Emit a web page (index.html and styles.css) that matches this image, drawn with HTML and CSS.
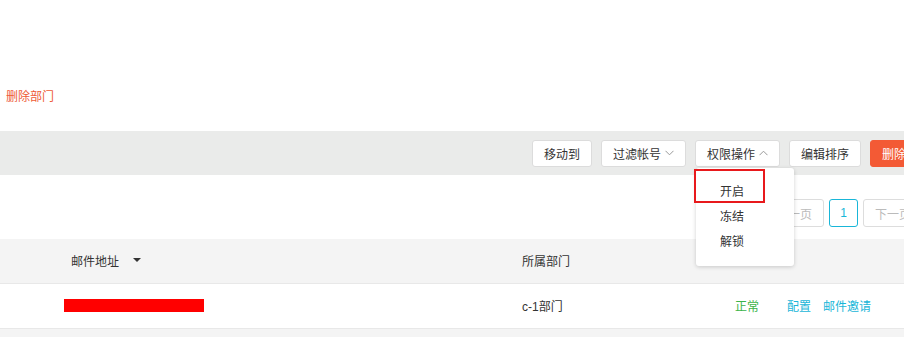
FILE: index.html
```html
<!DOCTYPE html>
<html lang="zh-CN">
<head>
  <meta charset="UTF-8">
  <meta name="viewport" content="width=device-width, initial-scale=1.0">
  <title>成员管理</title>
  <link rel="stylesheet" href="styles.css">
</head>
<body>
  <div class="page">
    <div class="dept-bar">
      <a class="dept-link" href="#">删除部门</a>
    </div>

    <div class="toolbar">
      <button class="btn">移动到</button>
      <button class="btn">过滤帐号
        <svg class="chev" width="9" height="6" viewBox="0 0 9 6"><path d="M0.5 0.8 L4.5 4.8 L8.5 0.8" fill="none" stroke="#999" stroke-width="1"/></svg>
      </button>
      <div class="btn-wrap">
        <button class="btn">权限操作
          <svg class="chev" width="9" height="6" viewBox="0 0 9 6"><path d="M0.5 5.2 L4.5 1.2 L8.5 5.2" fill="none" stroke="#999" stroke-width="1"/></svg>
        </button>
        <ul class="menu">
          <li class="menu-item">开启</li>
          <li class="menu-item">冻结</li>
          <li class="menu-item">解锁</li>
          <li class="mark"></li>
        </ul>
      </div>
      <button class="btn">编辑排序</button>
      <button class="btn btn-danger">删除</button>
    </div>

    <div class="pager">
      <button class="page-btn" disabled>上一页</button>
      <button class="page-btn current">1</button>
      <button class="page-btn" disabled>下一页</button>
    </div>

    <div class="table">
      <div class="row head">
        <div class="cell c-mail">邮件地址<span class="caret"></span></div>
        <div class="cell c-dept">所属部门</div>
        <div class="cell c-status"></div>
        <div class="cell c-ops"></div>
      </div>
      <div class="row">
        <div class="cell c-mail"><span class="masked">user@example.com</span></div>
        <div class="cell c-dept">c-1部门</div>
        <div class="cell c-status"><span class="ok">正常</span></div>
        <div class="cell c-ops"><a href="#">配置</a><a href="#">邮件邀请</a></div>
      </div>
      <div class="row stripe"></div>
    </div>
  </div>
</body>
</html>
```

FILE: styles.css
```css
* {
  margin: 0;
  padding: 0;
  box-sizing: border-box;
}

html, body {
  overflow: hidden;
}

body {
  font-family: 'Liberation Sans', 'Noto Sans CJK SC', sans-serif;
  font-size: 12px;
  color: #333;
  background: #fff;
}

.page {
  width: 940px;
}

.dept-bar {
  height: 131px;
  padding: 89px 0 0 6px;
}

.dept-link {
  color: #ee5a36;
  text-decoration: none;
  line-height: 16px;
}

.toolbar {
  height: 44px;
  background-color: #eaebea;
  display: flex;
  align-items: center;
  justify-content: flex-end;
  gap: 9px;
  padding-right: 22px;
}

.btn {
  height: 27px;
  padding: 0 11px;
  font: inherit;
  color: #333;
  background: #fff;
  border: 1px solid #dcdcdc;
  border-radius: 3px;
  display: flex;
  align-items: center;
  gap: 4px;
}

.btn-danger {
  background-color: #f35a35;
  border-color: #f35a35;
  color: #fff;
  width: 48px;
}

.btn-wrap {
  position: relative;
}

.menu {
  position: absolute;
  top: 28px;
  left: 1px;
  width: 98px;
  height: 98px;
  list-style: none;
  background: #fff;
  border-radius: 3px;
  box-shadow: 0 1px 4px rgba(0, 0, 0, 0.18);
  padding-top: 12px;
  z-index: 5;
}

.menu-item {
  height: 25px;
  line-height: 25px;
  padding-left: 24px;
}

.mark {
  position: absolute;
  top: 1px;
  left: -2px;
  width: 71px;
  height: 34px;
  border: 2px solid #e8191c;
}

.pager {
  height: 64px;
  display: flex;
  align-items: center;
  justify-content: flex-end;
  gap: 5px;
  padding: 12px 17px 0 0;
}

.page-btn {
  height: 28px;
  padding: 0 11px;
  font: inherit;
  color: #bbb;
  background: #fff;
  border: 1px solid #ddd;
  border-radius: 3px;
}

.page-btn.current {
  width: 29px;
  padding: 0;
  color: #19b6d8;
  border-color: #19b6d8;
}

.row {
  height: 45px;
  display: flex;
  align-items: center;
  border-bottom: 1px solid #e8e8e8;
}

.row.head,
.row.stripe {
  background-color: #f4f4f4;
}

.cell {
  margin-top: -2px;
}

.cell.c-mail {
  width: 522px;
  padding-left: 64px;
  display: flex;
  align-items: center;
}

.head .cell.c-mail {
  padding-left: 71px;
}

.cell.c-dept {
  width: 213px;
}

.cell.c-status {
  width: 52px;
}

.cell.c-ops a {
  color: #19b6d8;
  text-decoration: none;
  margin-right: 12px;
}

.caret {
  display: inline-block;
  margin-left: 14px;
  border-left: 4px solid transparent;
  border-right: 4px solid transparent;
  border-top: 4px solid #333;
}

.masked {
  display: inline-block;
  width: 140px;
  height: 13px;
  background-color: #ff0000;
  color: transparent;
}

.ok {
  color: #3cb44a;
}
```
